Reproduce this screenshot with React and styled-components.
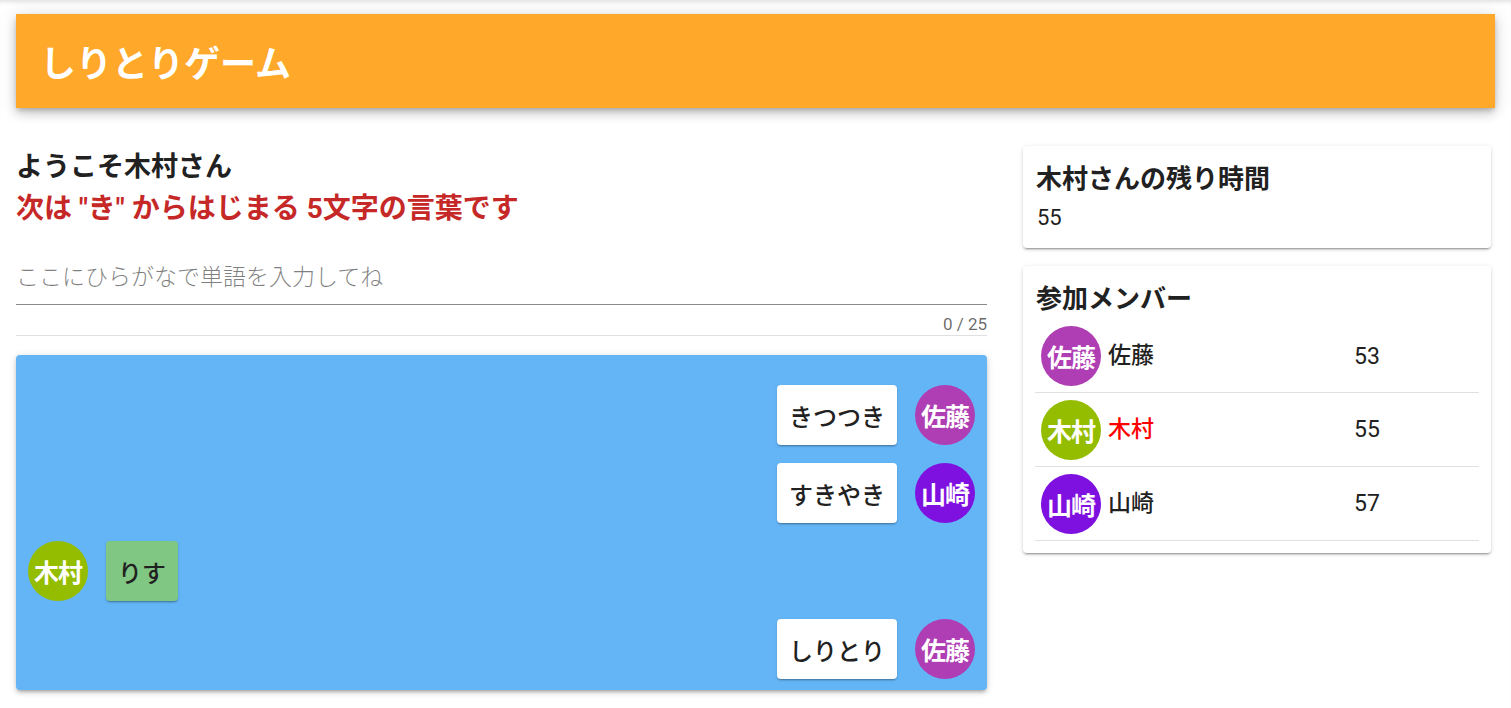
import React from 'react';
import styled, { createGlobalStyle } from 'styled-components';

const GlobalStyle = createGlobalStyle`
  body {
    margin: 0;
    background: #fff;
    font-family: Roboto, "Noto Sans CJK JP", sans-serif;
    color: rgba(0, 0, 0, 0.87);
  }
`;

const Page = styled.div`
  min-height: 708px;
  padding: 14px 16px 0;
  box-sizing: border-box;
  box-shadow: inset 0 5px 4px -3px rgba(0, 0, 0, 0.12);
`;

const Header = styled.header`
  height: 94px;
  display: flex;
  align-items: center;
  padding: 0 24px;
  background: #ffa82a;
  box-shadow: 0 3px 5px -1px rgba(0, 0, 0, 0.2), 0 6px 10px 0 rgba(0, 0, 0, 0.14),
    0 1px 18px 0 rgba(0, 0, 0, 0.12);

  h1 {
    margin: 0;
    color: #fff;
    font-size: 36px;
    font-weight: 700;
    font-family: "Noto Sans CJK JP", sans-serif;
  }
`;

const Columns = styled.div`
  display: grid;
  grid-template-columns: 971px 468px;
  gap: 36px;
  margin-top: 42px;
`;

const Main = styled.div`
  display: flex;
  flex-direction: column;
`;

const Welcome = styled.h2`
  margin: 0;
  font-size: 27px;
  line-height: 34px;
  font-weight: 700;
  color: #212121;
`;

const Hint = styled.h3`
  margin: 8px 0 0;
  font-size: 28px;
  line-height: 34px;
  font-weight: 700;
  color: #c62828;
`;

const Field = styled.div`
  margin-top: 32px;
  border-bottom: 1px solid #e0e0e0;
  padding-bottom: 2px;

  input {
    display: block;
    width: 100%;
    box-sizing: border-box;
    border: none;
    border-bottom: 1px solid #8a8a8a;
    outline: none;
    padding: 6px 0 13px;
    font-size: 23px;
    font-family: Roboto, "Noto Sans CJK JP", sans-serif;
    background: transparent;

    &::placeholder {
      color: rgba(0, 0, 0, 0.5);
      font-weight: 300;
    }
  }
`;

const Counter = styled.div`
  text-align: right;
  font-size: 17px;
  line-height: 18px;
  margin-top: 10px;
  color: rgba(0, 0, 0, 0.6);
`;

const Chat = styled.div`
  margin-top: 19px;
  height: 335px;
  box-sizing: border-box;
  padding: 30px 12px 0;
  background: #64b5f6;
  border-radius: 4px;
  box-shadow: 0 3px 3px -2px rgba(0, 0, 0, 0.2), 0 3px 4px 0 rgba(0, 0, 0, 0.14),
    0 1px 8px 0 rgba(0, 0, 0, 0.12);
  display: flex;
  flex-direction: column;
  gap: 18px;
`;

const ChatRow = styled.div`
  display: flex;
  align-items: center;
  gap: 18px;
  justify-content: ${({ $mine }) => ($mine ? 'flex-start' : 'flex-end')};
`;

const Bubble = styled.div`
  height: 60px;
  min-width: 72px;
  padding: 0 12px;
  box-sizing: border-box;
  display: flex;
  align-items: center;
  justify-content: center;
  border-radius: 4px;
  background: ${({ $mine }) => ($mine ? '#81c784' : '#fff')};
  font-size: 24px;
  font-weight: 500;
  color: #212121;
  box-shadow: 0 2px 2px -1px rgba(0, 0, 0, 0.3), 0 1px 3px 0 rgba(0, 0, 0, 0.12);
`;

const Avatar = styled.div`
  width: 60px;
  height: 60px;
  flex: none;
  border-radius: 50%;
  background: ${({ $color }) => $color};
  color: #fff;
  display: flex;
  align-items: center;
  justify-content: center;
  font-size: 25px;
  font-weight: 700;
  letter-spacing: -1px;
  font-family: "Noto Sans CJK JP", sans-serif;
`;

const Side = styled.div`
  display: flex;
  flex-direction: column;
  gap: 18px;
  margin-top: -4px;
`;

const Card = styled.section`
  background: #fff;
  border-radius: 4px;
  padding: 16px 12px ${({ $bottom }) => $bottom || 10}px;
  box-shadow: 0 3px 1px -2px rgba(0, 0, 0, 0.2), 0 2px 2px 0 rgba(0, 0, 0, 0.14),
    0 1px 5px 0 rgba(0, 0, 0, 0.12);
`;

const CardTitle = styled.h3`
  margin: 0;
  padding: 0 1px;
  font-size: 26px;
  line-height: 34px;
  font-weight: 700;
  color: #212121;
`;

const TimeLeft = styled.div`
  padding: 7px 2px 5px;
  font-size: 22px;
  line-height: 30px;
  color: #212121;
`;

const MemberList = styled.div`
  margin-top: 10px;
`;

const MemberRow = styled.div`
  display: grid;
  grid-template-columns: 313px 1fr;
  align-items: center;
  padding: 0 0 0 6px;
  height: 74px;
  border-bottom: 1px solid #e0e0e0;
  box-sizing: border-box;

  &:first-child {
    height: 67px;
    padding-bottom: 6px;
  }
`;

const MemberName = styled.div`
  display: flex;
  align-items: center;
  gap: 7px;

  span {
    font-size: 23px;
    font-weight: 500;
    margin-top: -6px;
    color: ${({ $me }) => ($me ? '#ff0000' : '#212121')};
  }
`;

const Score = styled.div`
  font-size: 23px;
  color: #212121;
`;

const colors = {
  佐藤: '#af3eb4',
  山崎: '#7f11e0',
  木村: '#95bd00',
};

const messages = [
  { word: 'きつつき', user: '佐藤' },
  { word: 'すきやき', user: '山崎' },
  { word: 'りす', user: '木村', mine: true },
  { word: 'しりとり', user: '佐藤' },
];

const members = [
  { name: '佐藤', score: 53 },
  { name: '木村', score: 55, me: true },
  { name: '山崎', score: 57 },
];

const App = () => (
  <Page>
    <GlobalStyle />
    <Header>
      <h1>しりとりゲーム</h1>
    </Header>

    <Columns>
      <Main>
        <Welcome>ようこそ木村さん</Welcome>
        <Hint>次は "き" からはじまる 5文字の言葉です</Hint>
        <Field>
          <input placeholder="ここにひらがなで単語を入力してね" />
          <Counter>0 / 25</Counter>
        </Field>

        <Chat>
          {messages.map((m, i) => (
            <ChatRow key={i} $mine={m.mine}>
              {m.mine ? (
                <>
                  <Avatar $color={colors[m.user]}>{m.user}</Avatar>
                  <Bubble $mine>{m.word}</Bubble>
                </>
              ) : (
                <>
                  <Bubble>{m.word}</Bubble>
                  <Avatar $color={colors[m.user]}>{m.user}</Avatar>
                </>
              )}
            </ChatRow>
          ))}
        </Chat>
      </Main>

      <Side>
        <Card>
          <CardTitle>木村さんの残り時間</CardTitle>
          <TimeLeft>55</TimeLeft>
        </Card>

        <Card $bottom={12}>
          <CardTitle>参加メンバー</CardTitle>
          <MemberList>
            {members.map((m) => (
              <MemberRow key={m.name}>
                <MemberName $me={m.me}>
                  <Avatar $color={colors[m.name]}>{m.name}</Avatar>
                  <span>{m.name}</span>
                </MemberName>
                <Score>{m.score}</Score>
              </MemberRow>
            ))}
          </MemberList>
        </Card>
      </Side>
    </Columns>
  </Page>
);

export default App;
